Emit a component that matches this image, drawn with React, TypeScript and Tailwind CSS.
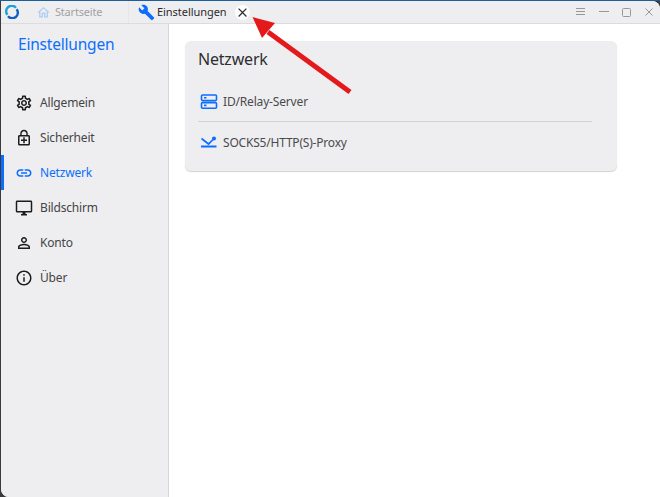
import { MdBuild, MdClose, MdOutlineHome, MdOutlineSettings, MdOutlineEnhancedEncryption, MdOutlineLink, MdOutlineDesktopWindows, MdOutlinePersonOutline, MdOutlineInfo } from "react-icons/md"

const nav = [
  { label: "Allgemein", icon: <MdOutlineSettings size={18} /> },
  { label: "Sicherheit", icon: <MdOutlineEnhancedEncryption size={18} /> },
  { label: "Netzwerk", icon: <MdOutlineLink size={18} />, active: true },
  { label: "Bildschirm", icon: <MdOutlineDesktopWindows size={18} /> },
  { label: "Konto", icon: <MdOutlinePersonOutline size={18} /> },
  { label: "Über", icon: <MdOutlineInfo size={18} /> },
]

export default function App() {
  return (
    <div className="relative flex h-[497px] w-[660px] flex-col overflow-hidden bg-[#3a3a3c] font-['Noto_Sans',sans-serif]">
      <div className="h-px shrink-0 bg-[#1c5f98]" />
      <div className="ml-px flex min-h-0 flex-1 flex-col overflow-hidden rounded-tr-lg rounded-bl-lg bg-white">
        {/* Title bar */}
        <div className="flex h-[23px] shrink-0 items-center border-b border-[#dcdcde] bg-[#eeeef0]">
          <svg width="14" height="14" viewBox="0 0 14 14" fill="none" className="ml-[4px]">
            <path d="M11 2.8 A5.3 5.3 0 0 0 2.4 9.8" stroke="#1f9fd8" strokeWidth="2.4" />
            <path d="M3 11.2 A5.3 5.3 0 0 0 11.6 4.2" stroke="#0f5fc4" strokeWidth="2.4" />
          </svg>
          <div className="ml-[17px] flex h-full w-[93px] items-center gap-[4px] border-r border-[#e6e6e8] text-[#a2a2a4]">
            <MdOutlineHome size={15} className="text-[#a9cdf2]" />
            <span className="text-[11px] tracking-[-0.2px]">Startseite</span>
          </div>
          <div className="ml-[9px] flex items-center text-[#2b2b2d]">
            <MdBuild size={17} className="text-[#0d6efd]" />
            <span className="ml-[2px] text-[11px] tracking-[-0.05px]">Einstellungen</span>
            <span className="ml-[8px] flex h-[15px] w-[15px] items-center justify-center rounded-full bg-white">
              <MdClose size={15} className="text-[#333335]" />
            </span>
          </div>
          <div className="ml-auto flex items-center text-[#98989a]">
            <svg width="11" height="8" viewBox="0 0 11 8" stroke="currentColor" fill="none">
              <path d="M1 .5h9M1 3.5h9M1 6.5h9" />
            </svg>
            <svg width="10" height="2" viewBox="0 0 10 2" stroke="currentColor" fill="none" className="ml-[13px]">
              <path d="M0 .5h10" />
            </svg>
            <svg width="9" height="9" viewBox="0 0 9 9" stroke="currentColor" fill="none" className="ml-[13px]">
              <rect x=".5" y=".5" width="8" height="8" rx="1" />
            </svg>
            <svg width="8" height="8" viewBox="0 0 8 8" stroke="currentColor" fill="none" className="ml-[14px] mr-[7px]">
              <path d="M.5 .5l7 7M7.5 .5l-7 7" />
            </svg>
          </div>
        </div>

        <div className="flex min-h-0 flex-1">
          {/* Sidebar */}
          <aside className="w-[168px] shrink-0 border-r border-[#d6d6d8] bg-[#eeeef0]">
            <h1 className="pl-[17px] pt-[8px] text-[15.5px] leading-[24px] tracking-[-0.2px] text-[#0d6efd]">Einstellungen</h1>
            <nav className="mt-[29px] flex flex-col">
              {nav.map((item) => (
                <div
                  key={item.label}
                  className={
                    item.active
                      ? "flex h-[35px] items-center border-l-[3px] border-[#0d6efd] text-[#0d6efd]"
                      : "flex h-[35px] items-center border-l-[3px] border-transparent text-[#444446]"
                  }
                >
                  <span className={item.active ? "ml-[11px] text-[#0d6efd]" : "ml-[11px] text-[#1c1c1e]"}>{item.icon}</span>
                  <span className="ml-[7px] text-[12px] tracking-[-0.17px]">{item.label}</span>
                </div>
              ))}
            </nav>
          </aside>

          {/* Content */}
          <main className="flex-1 pl-[16px] pt-[17px]">
            <section className="h-[130px] w-[432px] rounded-md bg-[#eeeef0] pl-[13px] shadow-[0_1px_1px_rgba(0,0,0,0.18)]">
              <h2 className="pt-[6px] text-[16px] leading-[24px] tracking-[-0.2px] text-[#2f2f31]">Netzwerk</h2>
              <div className="mr-[25px] mt-[11px] flex h-[40px] items-center border-b border-[#d2d2d4] pt-[1px]">
                <svg width="18" height="16" viewBox="0 0 18 16" fill="none" stroke="#0d6efd" strokeWidth="1.6" className="ml-[2px]">
                  <rect x="1.5" y="1" width="15" height="5.6" rx="1" />
                  <rect x="1.5" y="8.6" width="15" height="5.6" rx="1" />
                  <path d="M4 3.8h2.5M4 11.4h2.5" />
                </svg>
                <span className="ml-[5px] text-[12px] tracking-[-0.17px] text-[#4a4a4c]">ID/Relay-Server</span>
              </div>
              <div className="flex h-[41px] items-center">
                <svg width="18" height="16" viewBox="0 0 18 16" fill="none" className="ml-[2px]">
                  <path d="M1.5 3.5 L8.5 9 L13 4.5" stroke="#0d6efd" strokeWidth="1.7" />
                  <circle cx="14" cy="3.5" r="2" fill="#0d6efd" />
                  <path d="M1 11.5h15.5" stroke="#0d6efd" strokeWidth="1.8" />
                </svg>
                <span className="ml-[5px] text-[12px] tracking-[-0.2px] text-[#4a4a4c]">SOCKS5/HTTP(S)-Proxy</span>
              </div>
            </section>
          </main>
        </div>
      </div>

      {/* Annotation arrow */}
      <svg width="660" height="497" viewBox="0 0 660 497" className="pointer-events-none absolute left-0 top-0">
        <path d="M350 92 L268 32" stroke="#e3191c" strokeWidth="5" />
        <path d="M252.5 17 L275 23 L262 38 Z" fill="#e3191c" />
      </svg>
    </div>
  )
}
